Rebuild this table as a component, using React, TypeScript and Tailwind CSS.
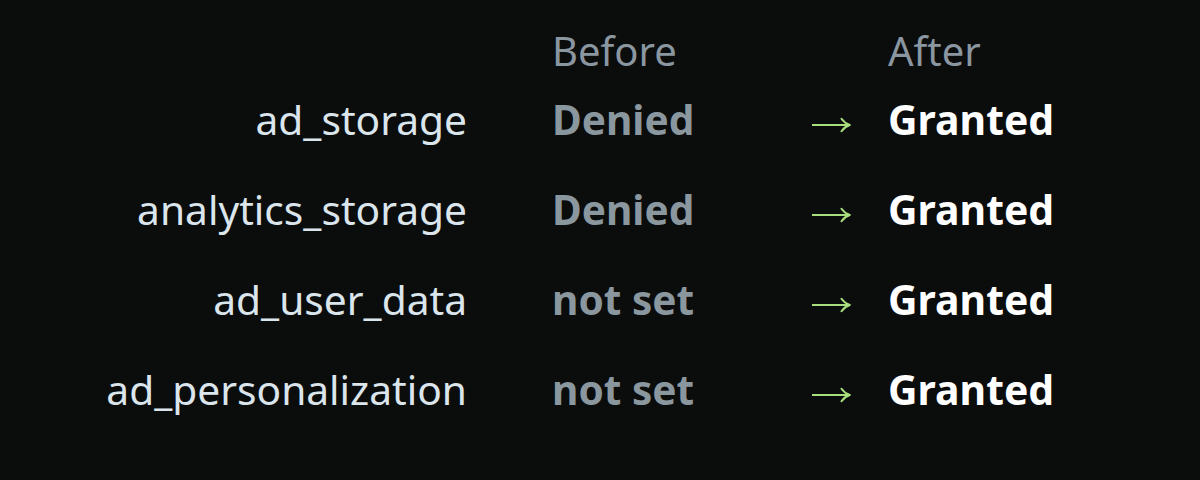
import React from "react";

const rows = [
  { k: "ad_storage", v: "Denied" },
  { k: "analytics_storage", v: "Denied" },
  { k: "ad_user_data", v: "not set" },
  { k: "ad_personalization", v: "not set" },
];

function Arrow() {
  return (
    <svg width="40" height="16" viewBox="0 0 40 16" fill="none" className="mt-[9px] ml-px">
      <line x1="1" y1="8" x2="37.5" y2="8" stroke="#a8df7e" strokeWidth="2" />
      <path
        d="M30.5 1.8 Q33.5 6.2 38.8 8 Q33.5 9.8 30.5 14.2"
        stroke="#a8df7e"
        strokeWidth="2"
        strokeLinejoin="round"
        strokeLinecap="round"
      />
    </svg>
  );
}

export default function App() {
  return (
    <div className="w-[1200px] h-[480px] bg-[#0b0c0c] pt-[27px] font-['Noto_Sans','Open_Sans',sans-serif]">
      <div className="grid grid-cols-[467px_343px_78px_1fr] auto-rows-[90px] grid-rows-[48px]">
        <div />
        <div className="pl-[85px] flex items-center text-[40px] text-[#8a96a0]">Before</div>
        <div />
        <div className="flex items-center text-[40px] text-[#8a96a0]">After</div>
        {rows.map((r) => (
          <React.Fragment key={r.k}>
            <div className="flex items-center justify-end text-[40.7px] text-[#dbe5ec]">{r.k}</div>
            <div className="pl-[85px] flex items-center text-[40.6px] font-bold text-[#8a979f]">{r.v}</div>
            <div className="flex items-center">
              <Arrow />
            </div>
            <div className="flex items-center text-[40.9px] font-bold text-white">Granted</div>
          </React.Fragment>
        ))}
      </div>
    </div>
  );
}
